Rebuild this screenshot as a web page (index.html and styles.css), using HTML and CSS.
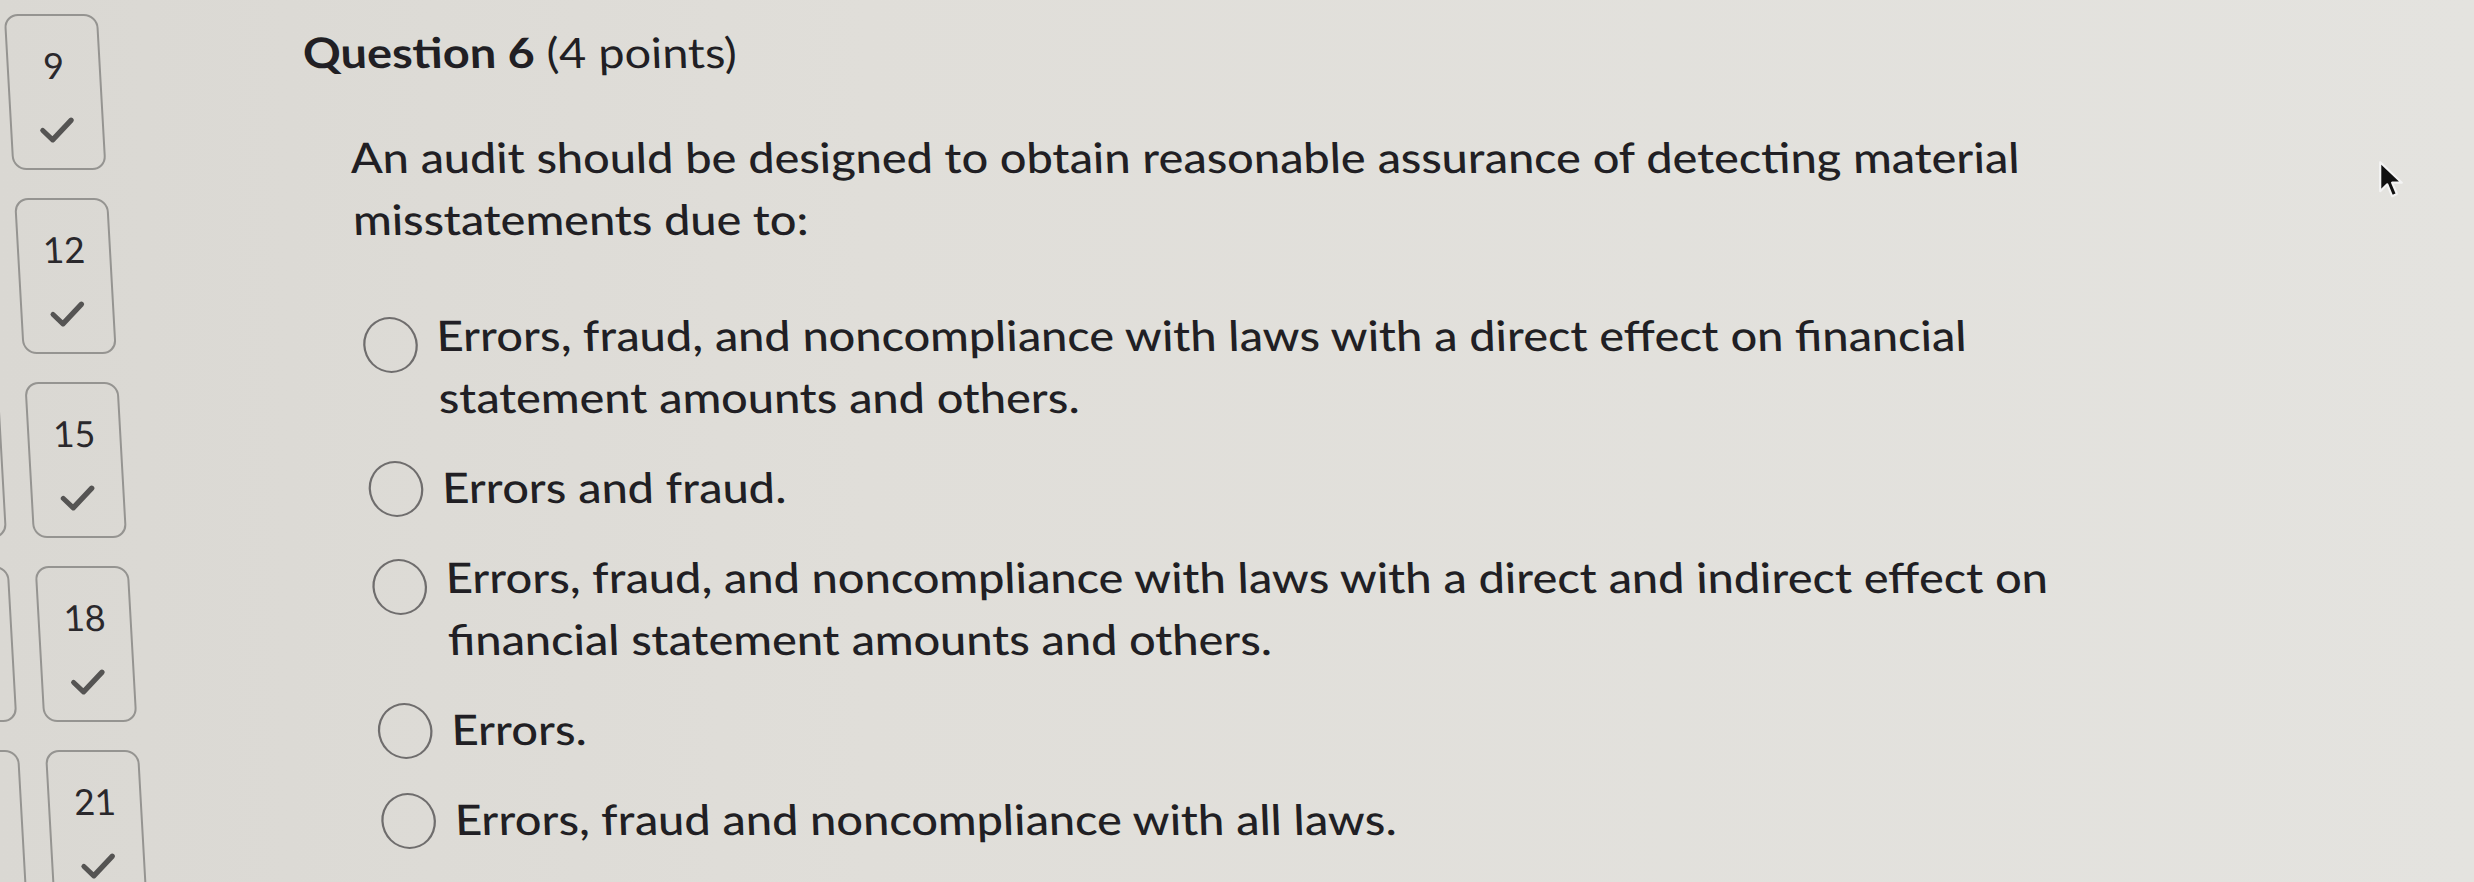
FILE: index.html
```html
<!DOCTYPE html>
<html lang="en">
<head>
<meta charset="utf-8">
<title>Question 6</title>
<link rel="stylesheet" href="styles.css">
</head>
<body>
<div class="page">
  <nav class="sidebar">
    <div class="qbox ghost" aria-hidden="true"></div>
    <div class="qbox"><span class="qnum">9</span><svg class="check" viewBox="0 0 36 28"><polyline points="4,15 13,24 32,5"/></svg></div>
    <div class="qbox ghost" aria-hidden="true"></div>
    <div class="qbox"><span class="qnum">12</span><svg class="check" viewBox="0 0 36 28"><polyline points="4,15 13,24 32,5"/></svg></div>
    <div class="qbox ghost" aria-hidden="true"></div>
    <div class="qbox"><span class="qnum">15</span><svg class="check" viewBox="0 0 36 28"><polyline points="4,15 13,24 32,5"/></svg></div>
    <div class="qbox ghost" aria-hidden="true"></div>
    <div class="qbox"><span class="qnum">18</span><svg class="check" viewBox="0 0 36 28"><polyline points="4,15 13,24 32,5"/></svg></div>
    <div class="qbox ghost" aria-hidden="true"></div>
    <div class="qbox"><span class="qnum">21</span><svg class="check" viewBox="0 0 36 28"><polyline points="4,15 13,24 32,5"/></svg></div>
  </nav>
  <main class="main">
    <h2 class="title"><strong>Question 6</strong> (4 points)</h2>
    <p class="stem">An audit should be designed to obtain reasonable assurance of detecting material misstatements due to:</p>
    <div class="options">
      <label class="option multi"><span class="radio"></span><span class="otext">Errors, fraud, and noncompliance with laws with a direct effect on financial statement amounts and others.</span></label>
      <label class="option"><span class="radio"></span><span class="otext">Errors and fraud.</span></label>
      <label class="option multi"><span class="radio"></span><span class="otext">Errors, fraud, and noncompliance with laws with a direct and indirect effect on financial statement amounts and others.</span></label>
      <label class="option"><span class="radio"></span><span class="otext">Errors.</span></label>
      <label class="option"><span class="radio"></span><span class="otext">Errors, fraud and noncompliance with all laws.</span></label>
    </div>
  </main>
</div>
<svg class="cursor" viewBox="0 0 24 38"><path d="M2 2 L2 29 L8.5 22.5 L13 33.5 L17.5 31.5 L13 21 L22 21 Z"/></svg>
</body>
</html>
```

FILE: styles.css
```css
html, body {
  margin: 0;
  padding: 0;
}

body {
  width: 2474px;
  height: 882px;
  overflow: hidden;
  position: relative;
  background: linear-gradient(90deg, #dad8d3 0%, #e0ded9 35%, #e4e3df 100%);
  font-family: Lato, "Open Sans", "Liberation Sans", sans-serif;
  color: #211f24;
}

.page {
  display: flex;
  align-items: flex-start;
}

.sidebar {
  margin-left: -117px;
  padding-top: 14px;
  display: grid;
  grid-template-columns: 94px 94px;
  column-gap: 26px;
  row-gap: 28px;
  transform: skewX(3.2deg);
  transform-origin: 0 0;
  flex: none;
}

.qbox {
  box-sizing: border-box;
  height: 156px;
  border: 2px solid #959491;
  border-radius: 14px;
  display: flex;
  flex-direction: column;
  align-items: center;
  padding-top: 31px;
}

.qnum {
  font-size: 36px;
  line-height: 36px;
  color: #2a282c;
}

.check {
  width: 38px;
  height: 29px;
  margin-top: 32px;
  fill: none;
  stroke: #555453;
  stroke-width: 5;
  stroke-linecap: round;
  stroke-linejoin: round;
}

.main {
  margin-left: 204px;
  width: 1595px;
  padding-top: 27px;
  transform: skewX(2.18deg) scaleX(1.115);
  transform-origin: 0 0;
  flex: none;
}

.title {
  margin: 0;
  font-size: 42px;
  line-height: 50px;
  font-weight: 400;
}

.title strong {
  font-weight: 700;
}

.stem {
  margin: 49px 0 0 39px;
  font-size: 42px;
  line-height: 62px;
  font-weight: 500;
}

.options {
  margin: 54px 0 0 44px;
  display: flex;
  flex-direction: column;
  gap: 28px;
}

.option {
  display: flex;
  align-items: flex-start;
  gap: 17px;
  font-size: 42px;
  line-height: 62px;
  font-weight: 500;
}

.radio {
  flex: none;
  box-sizing: border-box;
  width: 49px;
  height: 56px;
  margin-top: 5px;
  border: 2.4px solid #6f6d6d;
  border-radius: 50%;
}

.option.multi .radio {
  margin-top: 13px;
}

.otext {
  flex: 1;
}

.cursor {
  position: absolute;
  left: 2378px;
  top: 160px;
  width: 26px;
  height: 41px;
  fill: #111;
  stroke: #f4f4f4;
  stroke-width: 2;
  stroke-linejoin: round;
}
```
